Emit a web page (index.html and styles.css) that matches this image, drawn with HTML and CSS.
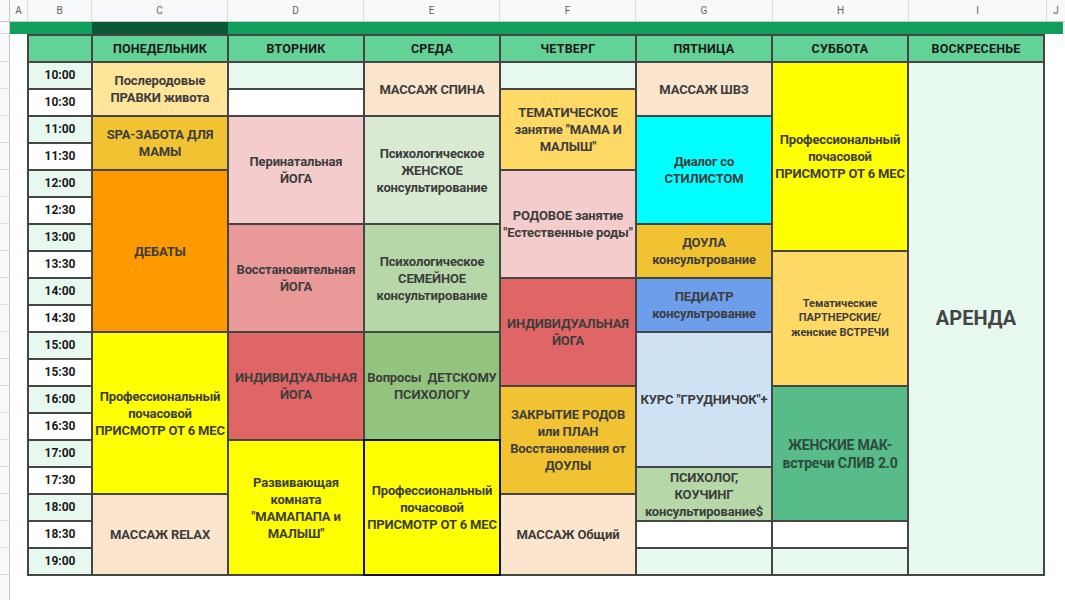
FILE: index.html
```html
<!DOCTYPE html>
<html lang="ru">
<head>
<meta charset="utf-8">
<title>Расписание</title>
<link rel="stylesheet" href="styles.css">
</head>
<body>
<div class="sheet">
  <div class="colheads">
    <div class="ch corner"></div>
    <div class="ch w-a">A</div>
    <div class="ch w-b">B</div>
    <div class="ch w-day">C</div>
    <div class="ch w-day">D</div>
    <div class="ch w-day">E</div>
    <div class="ch w-day">F</div>
    <div class="ch w-g">G</div>
    <div class="ch w-day">H</div>
    <div class="ch w-i">I</div>
    <div class="ch w-j">J</div>
  </div>
  <div class="body">
    <div class="rowheads">
      <div class="rh rh-first"></div>
      <div class="rh rh-head"></div>
      <div class="rh"></div><div class="rh"></div><div class="rh"></div><div class="rh"></div>
      <div class="rh"></div><div class="rh"></div><div class="rh"></div><div class="rh"></div>
      <div class="rh"></div><div class="rh"></div><div class="rh"></div><div class="rh"></div>
      <div class="rh"></div><div class="rh"></div><div class="rh"></div><div class="rh"></div>
      <div class="rh"></div><div class="rh"></div><div class="rh"></div>
    </div>
    <div class="content">
      <div class="greenbar">
        <div class="gb gb-left"></div>
        <div class="gb gb-dark"></div>
        <div class="gb gb-right"></div>
      </div>
      <table class="sched">
        <colgroup>
          <col class="c-time">
          <col class="c-day"><col class="c-day"><col class="c-day"><col class="c-day">
          <col class="c-day"><col class="c-day"><col class="c-day">
        </colgroup>
        <thead>
          <tr>
            <th class="hd"></th>
            <th class="hd">ПОНЕДЕЛЬНИК</th>
            <th class="hd">ВТОРНИК</th>
            <th class="hd">СРЕДА</th>
            <th class="hd">ЧЕТВЕРГ</th>
            <th class="hd">ПЯТНИЦА</th>
            <th class="hd">СУББОТА</th>
            <th class="hd">ВОСКРЕСЕНЬЕ</th>
          </tr>
        </thead>
        <tbody>
          <tr>
            <td class="time odd">10:00</td>
            <td class="ev lemon" rowspan="2">Послеродовые<br>ПРАВКИ живота</td>
            <td class="odd"></td>
            <td class="ev peach" rowspan="2">МАССАЖ СПИНА</td>
            <td class="odd"></td>
            <td class="ev peach" rowspan="2">МАССАЖ ШВЗ</td>
            <td class="ev yellow" rowspan="7">Профессиональный<br>почасовой<br>ПРИСМОТР ОТ 6 МЕС</td>
            <td class="ev rent" rowspan="19">АРЕНДА</td>
          </tr>
          <tr>
            <td class="time even">10:30</td>
            <td class="even"></td>
            <td class="ev sand" rowspan="3">ТЕМАТИЧЕСКОЕ<br>занятие "МАМА И<br>МАЛЫШ"</td>
          </tr>
          <tr>
            <td class="time odd">11:00</td>
            <td class="ev gold" rowspan="2">SPA-ЗАБОТА ДЛЯ<br>МАМЫ</td>
            <td class="ev rose" rowspan="4">Перинатальная<br>ЙОГА</td>
            <td class="ev sage" rowspan="4">Психологическое<br>ЖЕНСКОЕ<br>консультирование</td>
            <td class="ev cyan" rowspan="4">Диалог со<br>СТИЛИСТОМ</td>
          </tr>
          <tr>
            <td class="time even">11:30</td>
          </tr>
          <tr>
            <td class="time odd">12:00</td>
            <td class="ev orange" rowspan="6">ДЕБАТЫ</td>
            <td class="ev rose" rowspan="4">РОДОВОЕ занятие<br>"Естественные роды"</td>
          </tr>
          <tr>
            <td class="time even">12:30</td>
          </tr>
          <tr>
            <td class="time odd">13:00</td>
            <td class="ev salmon" rowspan="4">Восстановительная<br>ЙОГА</td>
            <td class="ev green2" rowspan="4">Психологическое<br>СЕМЕЙНОЕ<br>консультирование</td>
            <td class="ev gold" rowspan="2">ДОУЛА<br>консультрование</td>
          </tr>
          <tr>
            <td class="time even">13:30</td>
            <td class="ev sand small" rowspan="5">Тематические<br>ПАРТНЕРСКИЕ/<br>женские ВСТРЕЧИ</td>
          </tr>
          <tr>
            <td class="time odd">14:00</td>
            <td class="ev red" rowspan="4">ИНДИВИДУАЛЬНАЯ<br>ЙОГА</td>
            <td class="ev blue" rowspan="2">ПЕДИАТР<br>консультрование</td>
          </tr>
          <tr>
            <td class="time even">14:30</td>
          </tr>
          <tr>
            <td class="time odd">15:00</td>
            <td class="ev yellow" rowspan="6">Профессиональный<br>почасовой<br>ПРИСМОТР ОТ 6 МЕС</td>
            <td class="ev red" rowspan="4">ИНДИВИДУАЛЬНАЯ<br>ЙОГА</td>
            <td class="ev green3" rowspan="4">Вопросы&nbsp; ДЕТСКОМУ<br>ПСИХОЛОГУ</td>
            <td class="ev sky" rowspan="5">КУРС "ГРУДНИЧОК"+</td>
          </tr>
          <tr>
            <td class="time even">15:30</td>
          </tr>
          <tr>
            <td class="time odd">16:00</td>
            <td class="ev gold" rowspan="4">ЗАКРЫТИЕ РОДОВ<br>или ПЛАН<br>Восстановления от<br>ДОУЛЫ</td>
            <td class="ev mint big" rowspan="5">ЖЕНСКИЕ МАК-<br>встречи СЛИВ 2.0</td>
          </tr>
          <tr>
            <td class="time even">16:30</td>
          </tr>
          <tr>
            <td class="time odd">17:00</td>
            <td class="ev yellow" rowspan="5">Развивающая<br>комната<br>"МАМАПАПА и<br>МАЛЫШ"</td>
            <td class="ev yellow framed" rowspan="5">Профессиональный<br>почасовой<br>ПРИСМОТР ОТ 6 МЕС</td>
          </tr>
          <tr>
            <td class="time even">17:30</td>
            <td class="ev green2 tight" rowspan="2">ПСИХОЛОГ,<br>КОУЧИНГ<br>консультирование$</td>
          </tr>
          <tr>
            <td class="time odd">18:00</td>
            <td class="ev peach" rowspan="3">МАССАЖ RELAX</td>
            <td class="ev peach" rowspan="3">МАССАЖ Общий</td>
          </tr>
          <tr>
            <td class="time even">18:30</td>
            <td class="even"></td>
            <td class="even"></td>
          </tr>
          <tr>
            <td class="time odd">19:00</td>
            <td class="odd"></td>
            <td class="odd"></td>
          </tr>
        </tbody>
      </table>
    </div>
  </div>
</div>
</body>
</html>
```

FILE: styles.css
```css
* {
  box-sizing: border-box;
}

html, body {
  margin: 0;
  padding: 0;
  background: #ffffff;
}

.sheet {
  width: 1065px;
  height: 600px;
  overflow: hidden;
  background: #ffffff;
  font-family: Roboto, "Noto Sans", "Liberation Sans", sans-serif;
}

/* column letters */
.colheads {
  display: flex;
  height: 22px;
  background: #f8f9fa;
  border-bottom: 1px solid #c7c7c7;
}

.ch {
  height: 100%;
  border-right: 1px solid #dcdcdc;
  display: flex;
  align-items: center;
  justify-content: center;
  font-size: 10px;
  color: #5f6368;
  font-family: Roboto, "Liberation Sans", sans-serif;
}

.corner { width: 10px; border-right-color: #c7c7c7; }
.w-a { width: 18px; }
.w-b { width: 64px; }
.w-day { width: 136px; }
.w-g { width: 137px; }
.w-i { width: 138px; }
.w-j { flex: 1; border-right: none; }

/* body */
.body {
  display: flex;
}

.rowheads {
  width: 10px;
  background: #f8f9fa;
  border-right: 1px solid #c7c7c7;
  height: 578px;
  display: flex;
  flex-direction: column;
}

.rh {
  height: 27px;
  border-bottom: 1px solid #dcdcdc;
  flex: none;
}

.rh-first { height: 12px; }
.rh-head { height: 28px; }

.content {
  flex: 1;
}

.greenbar {
  display: flex;
  height: 12px;
  margin-right: 2px;
}

.gb-left { width: 82px; background: #11a05b; }
.gb-dark { width: 136px; background: #0b5837; }
.gb-right { flex: 1; background: #11a05b; }

/* schedule table */
.sched {
  margin-left: 17px;
  width: 1018px;
  table-layout: fixed;
  border-collapse: separate;
  border-spacing: 2px;
  background: #454545;
  font-family: Roboto, "Noto Sans", "Liberation Sans", sans-serif;
}

.c-time { width: 62px; }
.c-day { width: 134px; }

.sched th,
.sched td {
  height: 25px;
  padding: 0 2px;
  text-align: center;
  vertical-align: middle;
  font-weight: 700;
  font-size: 12.5px;
  line-height: 17px;
  color: #3d3d3d;
  background: #ffffff;
}

.sched th.hd {
  background: #63d297;
  color: #1a1a1a;
  letter-spacing: 0.2px;
}

.sched td.time {
  color: #1a1a1a;
  font-size: 12px;
}

.sched td.odd { background: #e7f9ef; }
.sched td.even { background: #ffffff; }

.sched td.ev {
  font-size: 13px;
  letter-spacing: -0.15px;
}

.lemon  { background: #ffe599 !important; }
.peach  { background: #fce5cd !important; }
.yellow { background: #ffff00 !important; }
.sand   { background: #ffd966 !important; }
.gold   { background: #f1c232 !important; }
.rose   { background: #f4cccc !important; }
.salmon { background: #ea9999 !important; }
.red    { background: #e06666 !important; }
.sage   { background: #d9ead3 !important; }
.green2 { background: #b6d7a8 !important; }
.green3 { background: #93c47d !important; }
.cyan   { background: #00ffff !important; }
.blue   { background: #6d9eeb !important; }
.sky    { background: #cfe2f3 !important; }
.mint   { background: #57bb8a !important; }
.orange { background: #ff9900 !important; }
.rent   { background: #e7f9ef !important; }

.sched td.rent {
  font-size: 20px;
  letter-spacing: 0;
  color: #444444;
}

.sched td.small {
  font-size: 11px;
  line-height: 14.5px;
  letter-spacing: 0;
}

.sched td.big {
  font-size: 14px;
  line-height: 18px;
  letter-spacing: -0.2px;
  color: #2f4a3c;
}

.sched td.tight {
  line-height: 17px;
}

.sched td.framed {
  outline: 2px solid #111111;
}
```
